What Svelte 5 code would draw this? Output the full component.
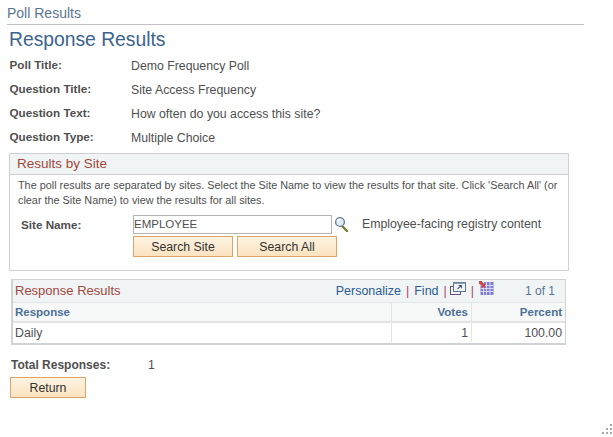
<script>
  const details = [
    ['Poll Title:', 'Demo Frequency Poll'],
    ['Question Title:', 'Site Access Frequency'],
    ['Question Text:', 'How often do you access this site?'],
    ['Question Type:', 'Multiple Choice']
  ];
</script>

<main>
  <div class="page-title">Poll Results</div>
  <h1>Response Results</h1>

  <dl class="details">
    {#each details as [label, value]}
      <div class="detail">
        <dt>{label}</dt>
        <dd>{value}</dd>
      </div>
    {/each}
  </dl>

  <section class="site-box">
    <h2>Results by Site</h2>
    <p>The poll results are separated by sites. Select the Site Name to view the results for that site. Click 'Search All' (or clear the Site Name) to view the results for all sites.</p>
    <div class="site-row">
      <label for="site">Site Name:</label>
      <input id="site" value="EMPLOYEE" />
      <svg class="lookup" width="15" height="16" viewBox="0 0 15 16">
        <path d="M8.5 10.5 L13 15" stroke="#7d7a3c" stroke-width="2.4" stroke-linecap="round" />
        <circle cx="6" cy="6" r="4.4" fill="#dfeaf7" stroke="#6b7f9c" stroke-width="1.4" />
        <path d="M3.5 5.5 A3 3 0 0 1 6 3.2" fill="none" stroke="#fff" stroke-width="1.2" />
      </svg>
      <span class="site-desc">Employee-facing registry content</span>
    </div>
    <div class="site-buttons">
      <button>Search Site</button>
      <button>Search All</button>
    </div>
  </section>

  <section class="grid">
    <div class="grid-head">
      <h2>Response Results</h2>
      <div class="grid-tools">
        <a href="#p">Personalize</a>
        <span class="sep">|</span>
        <a href="#f">Find</a>
        <span class="sep">|</span>
        <svg class="zoom-icon" width="16" height="14" viewBox="0 0 16 14">
          <rect x="0.5" y="4.5" width="10" height="8" fill="none" stroke="#6a4f7d" />
          <rect x="3.5" y="0.5" width="12" height="9" fill="#f1f4f5" stroke="#5b7289" />
          <path d="M3.5 0.5 H15.5 V2 H3.5 Z" fill="#8a9bb0" />
          <path d="M7.5 7 L11 3.6 M8.6 3.5 H11.4 V6.3" fill="none" stroke="#4a5a78" stroke-width="1.1" />
        </svg>
        <span class="sep">|</span>
        <svg width="15" height="15" viewBox="0 0 15 15">
          <rect x="1.5" y="1" width="13" height="13" fill="#7f7fd0" />
          <path d="M1.5 4.5 H14.5 M1.5 7.5 H14.5 M1.5 10.5 H14.5 M4.5 1 V14 M7.5 1 V14 M11 1 V14" stroke="#d8d8f2" stroke-width="1" />
          <path d="M0 0 H3 L3 1.2 L5.5 3.2 L6 2.5 V6.5 H2 L3.2 5.2 L0.8 2.8 L0 3.4 Z" fill="#d8403a" />
        </svg>
        <span class="count">1 of 1</span>
      </div>
    </div>
    <table>
      <thead>
        <tr>
          <th class="col-response">Response</th>
          <th class="num col-votes">Votes</th>
          <th class="num">Percent</th>
        </tr>
      </thead>
      <tbody>
        <tr>
          <td>Daily</td>
          <td class="num">1</td>
          <td class="num">100.00</td>
        </tr>
      </tbody>
    </table>
  </section>

  <div class="total">
    <span class="total-label">Total Responses:</span>
    <span>1</span>
  </div>
  <button class="return">Return</button>

  <svg class="resize" width="11" height="11" viewBox="0 0 11 11" fill="#a8a8a8">
    <rect x="8" y="0" width="2" height="2" />
    <rect x="4" y="4" width="2" height="2" />
    <rect x="8" y="4" width="2" height="2" />
    <rect x="0" y="8" width="2" height="2" />
    <rect x="4" y="8" width="2" height="2" />
    <rect x="8" y="8" width="2" height="2" />
  </svg>
</main>

<style>
  :global(body) {
    background: #fff;
    font-family: "Liberation Sans", Arial, sans-serif;
    font-size: 12.3px;
    color: #4f4f4f;
  }

  main {
    height: 437px;
    overflow: hidden;
    padding: 0 0 0 7px;
    box-sizing: border-box;
  }

  .page-title {
    width: 577px;
    height: 25px;
    box-sizing: border-box;
    padding-top: 5px;
    border-bottom: 1px solid #c2c2c2;
    font-size: 14px;
    line-height: 16px;
    color: #5a7592;
  }

  h1 {
    margin: 4px 0 0 2px;
    font-size: 19.3px;
    line-height: 22px;
    font-weight: normal;
    color: #3a638e;
  }

  .details {
    margin: 2px 0 0 2.5px;
  }

  .detail {
    display: flex;
    height: 24px;
    line-height: 24px;
  }

  dt {
    width: 121.5px;
    font-size: 11.7px;
    font-weight: bold;
    color: #4f4f4f;
  }

  dd {
    margin: 0;
    position: relative;
    top: 1px;
  }

  .site-box {
    width: 560px;
    height: 118px;
    box-sizing: border-box;
    margin: 4px 0 0 2px;
    border: 1px solid #cdd1d6;
  }

  .site-box h2 {
    margin: 0;
    height: 20px;
    padding-left: 7px;
    background: #f1f4f5;
    border-bottom: 1px solid #cdd1d6;
    font-size: 13.5px;
    line-height: 19px;
    font-weight: normal;
    color: #a4473c;
  }

  .site-box p {
    margin: 3px 4px 0 8px;
    font-size: 10.85px;
    line-height: 15px;
    color: #4f4f4f;
  }

  .site-row {
    display: flex;
    align-items: center;
    margin: 6px 0 0 11px;
    height: 20px;
  }

  label {
    width: 112px;
    font-size: 11.7px;
    font-weight: bold;
  }

  input {
    width: 199px;
    height: 19px;
    box-sizing: border-box;
    padding: 0;
    border: 1px solid #b5b5b5;
    border-radius: 0;
    font: 11.5px "Liberation Sans", Arial, sans-serif;
    color: #4f4f4f;
    outline: none;
  }

  .lookup {
    margin-left: 2px;
  }

  .site-desc {
    margin-left: 13px;
  }

  .site-buttons {
    display: flex;
    gap: 4px;
    margin: 2px 0 0 123px;
  }

  button {
    width: 100px;
    height: 21px;
    padding: 0;
    box-sizing: border-box;
    border: 1px solid #dca468;
    border-radius: 0;
    background: linear-gradient(#fdf3e2, #fbe3c0);
    font: 12.3px "Liberation Sans", Arial, sans-serif;
    color: #333;
  }

  .grid {
    width: 555px;
    height: 66px;
    box-sizing: border-box;
    margin: 8px 0 0 4px;
    border: 1px solid #d0d3d6;
    border-bottom-width: 2px;
    border-left-width: 2px;
  }

  .grid-head {
    display: flex;
    justify-content: space-between;
    height: 23px;
    background: #f1f4f5;
    border-bottom: 1px solid #e2e4e6;
    box-sizing: border-box;
  }

  .grid-head h2 {
    margin: 0;
    padding-left: 2px;
    font-size: 13px;
    line-height: 22px;
    font-weight: normal;
    color: #a4473c;
  }

  .grid-tools {
    display: flex;
    align-items: center;
    gap: 5px;
    padding-right: 10px;
    line-height: 22px;
  }

  .grid-tools a {
    font-size: 12.5px;
    color: #2b5c94;
    text-decoration: none;
  }

  .sep {
    color: #a4476a;
  }

  .grid-tools svg {
    margin-top: -5px;
  }

  .grid-tools .zoom-icon {
    margin-left: -2px;
  }

  .count {
    margin-left: 26px;
    font-size: 12px;
    color: #5a7592;
  }

  table {
    width: 100%;
    border-collapse: collapse;
    table-layout: fixed;
  }

  th {
    height: 18px;
    padding: 0 2px;
    background: #f7f8f8;
    border-bottom: 2px solid #e4e4e4;
    border-left: 1px solid #e4e4e4;
    text-align: left;
    font-size: 11.5px;
    font-weight: bold;
    color: #4c6f96;
  }

  th:first-child,
  td:first-child {
    border-left: 0;
  }

  .col-votes {
    width: 74px;
  }

  th:last-child {
    width: 88px;
  }

  th.num {
    padding-right: 3px;
  }

  td {
    height: 19px;
    padding: 0 2px;
    border-left: 1px solid #e4e4e4;
  }

  .num {
    text-align: right;
  }

  td.num {
    padding-right: 3px;
  }

  .total {
    display: flex;
    margin: 12px 0 0 4px;
    line-height: 16px;
  }

  .total-label {
    width: 137px;
    font-size: 12px;
    font-weight: bold;
  }

  .return {
    display: block;
    width: 76px;
    margin: 4px 0 0 3px;
  }

  .resize {
    position: absolute;
    right: 0;
    bottom: 2px;
  }
</style>
